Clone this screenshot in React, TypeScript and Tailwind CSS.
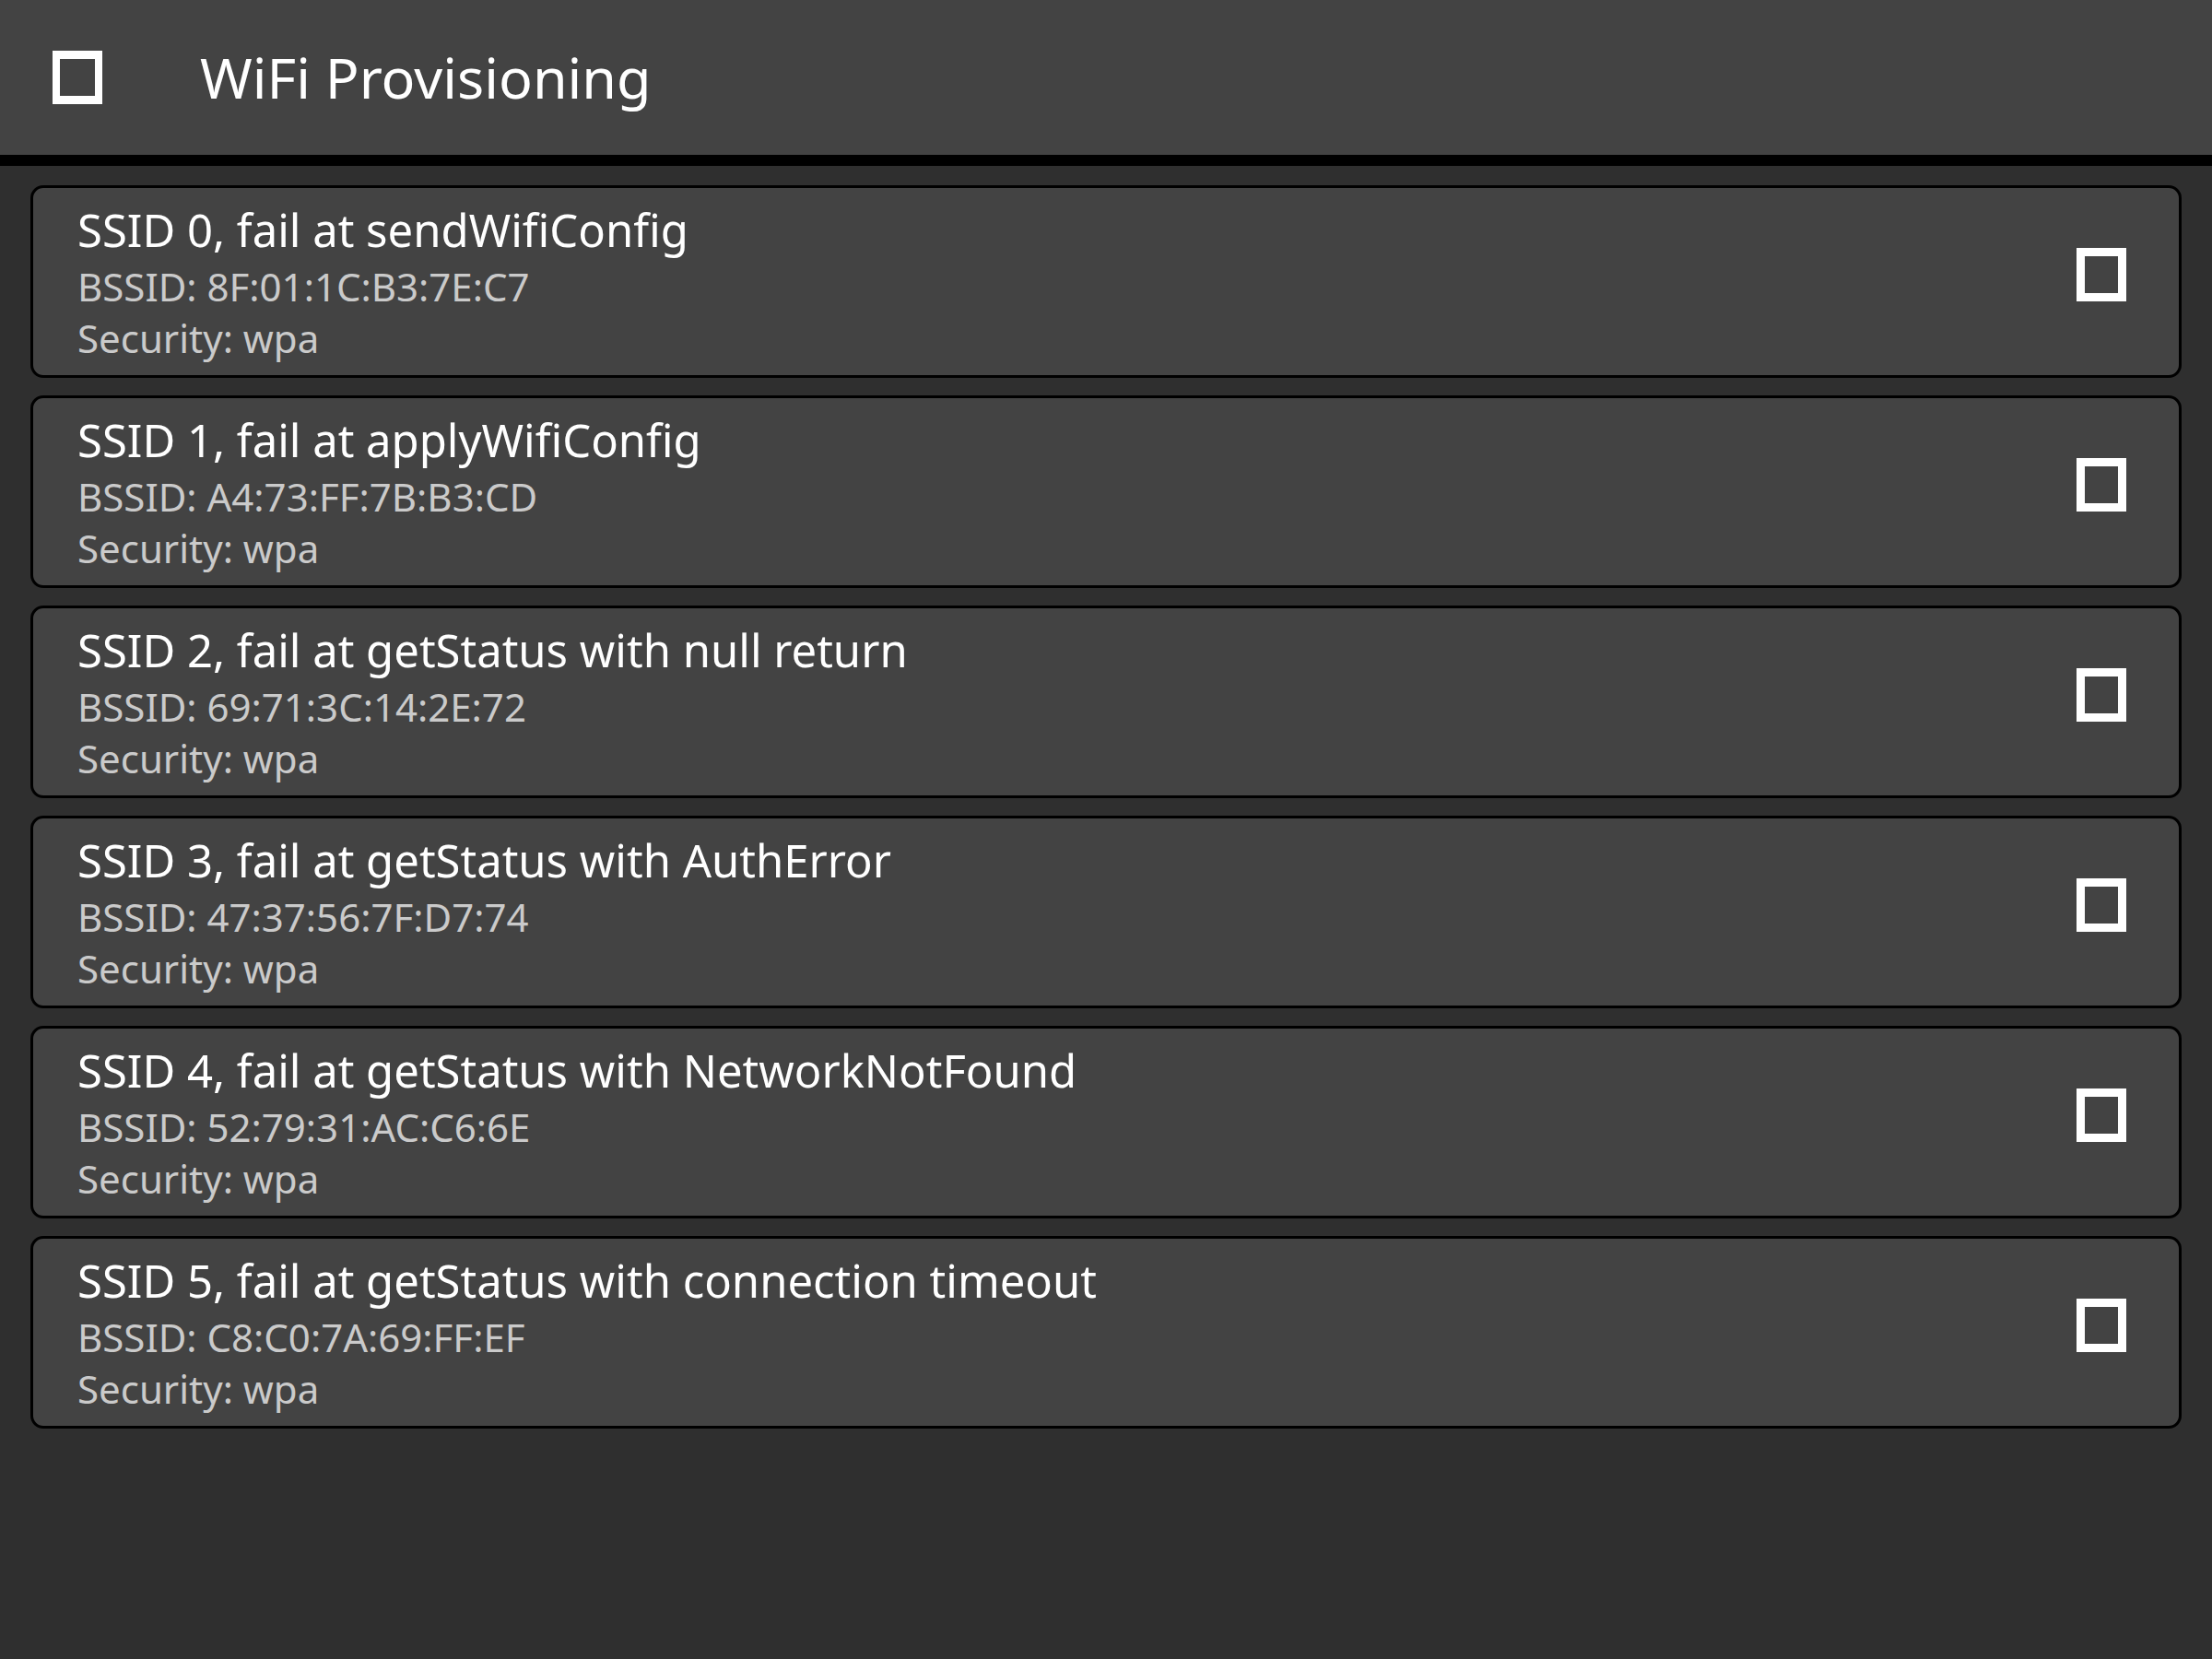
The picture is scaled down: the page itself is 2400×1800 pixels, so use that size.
import React from "react";

const items = [
  { ssid: "SSID 0, fail at sendWifiConfig", bssid: "8F:01:1C:B3:7E:C7" },
  { ssid: "SSID 1, fail at applyWifiConfig", bssid: "A4:73:FF:7B:B3:CD" },
  { ssid: "SSID 2, fail at getStatus with null return", bssid: "69:71:3C:14:2E:72" },
  { ssid: "SSID 3, fail at getStatus with AuthError", bssid: "47:37:56:7F:D7:74" },
  { ssid: "SSID 4, fail at getStatus with NetworkNotFound", bssid: "52:79:31:AC:C6:6E" },
  { ssid: "SSID 5, fail at getStatus with connection timeout", bssid: "C8:C0:7A:69:FF:EF" },
];

export default function App() {
  return (
    <div
      className="min-h-screen w-full bg-[#2f2f2f]"
      style={{ fontFamily: '"Noto Sans", "Open Sans", sans-serif' }}
    >
      <header className="flex h-[180px] items-center border-b-[12px] border-black bg-[#434343] pl-[57px]">
        <div className="h-[58px] w-[54px] border-x-[8px] border-y-[9px] border-white" />
        <h1 className="ml-[106px] text-[61px] leading-[84px] font-normal text-white">
          WiFi Provisioning
        </h1>
      </header>
      <main className="flex flex-col gap-[19px] px-[33px] pt-[21px]">
        {items.map((it) => (
          <div
            key={it.ssid}
            className="flex items-center rounded-[14px] border-[3px] border-black bg-[#434343] pt-[12px] pb-[12px] pl-[48px] pr-[57px]"
          >
            <div className="flex flex-1 flex-col">
              <div className="text-[49px] leading-[66px] text-white">{it.ssid}</div>
              <div className="text-[42px] leading-[57px] text-[#cacaca]">BSSID: {it.bssid}</div>
              <div className="text-[42px] leading-[56px] text-[#cacaca]">Security: wpa</div>
            </div>
            <div className="mb-[15px] h-[58px] w-[54px] border-[9px] border-white" />
          </div>
        ))}
      </main>
    </div>
  );
}
